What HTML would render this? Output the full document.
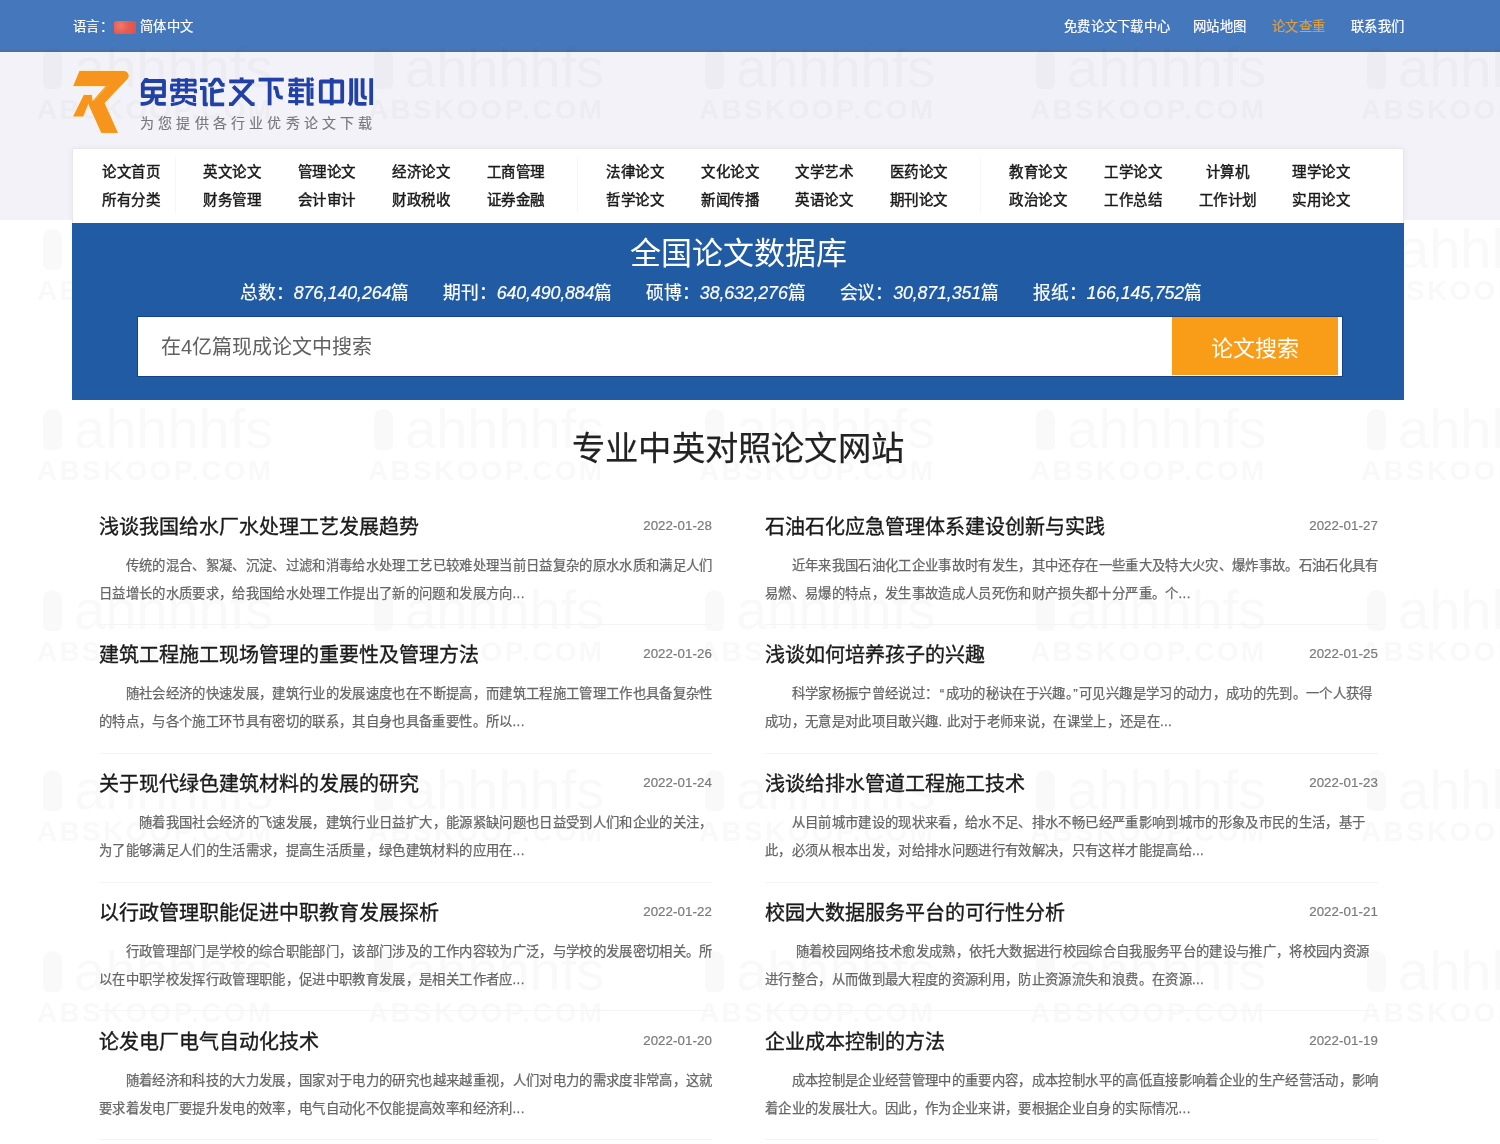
<!DOCTYPE html>
<html lang="zh-CN">
<head>
<meta charset="utf-8">
<title>免费论文下载中心</title>
<style>
*{box-sizing:border-box;margin:0;padding:0}
html,body{width:1500px;height:1144px;overflow:hidden}
body{font-family:"Liberation Sans",sans-serif;background:#fff;color:#222;position:relative}
a{color:inherit;text-decoration:none}
body>*{will-change:transform}
#list{position:absolute;left:0;top:0;width:1500px;height:1144px}
/* top bar */
#top{position:absolute;left:0;top:0;width:1500px;height:52px;background:#4577bd;color:#fff;font-size:13.3px;line-height:54px;letter-spacing:.28px;-webkit-text-stroke:.2px #fff}
#top:after{content:"";position:absolute;left:0;top:50px;width:1500px;height:2px;background:#4a70a4}
#top .l{position:absolute;left:73px;top:0;white-space:nowrap}
#top .flag{position:absolute;left:113.5px;top:20.5px;width:22.5px;height:13.5px;background:radial-gradient(circle at 30% 35%,#f07a6c 0,#e55d52 45%,#dc5249 100%);border-radius:2px}
#top .cn{position:absolute;left:140px;top:0;white-space:nowrap}
#top .r a{position:absolute;top:0;white-space:nowrap}
/* header */
#head{position:absolute;left:0;top:52px;width:1500px;height:168px;background:#f3f2f8}
#logoR{position:absolute;left:70px;top:66px}
#logoT{position:absolute;left:136px;top:74px}
#logoS{position:absolute;left:140px;top:113px;font-size:14px;line-height:20px;color:#77777c;white-space:nowrap;letter-spacing:4.2px;-webkit-text-stroke:.15px #77777c}
/* nav */
#nav{position:absolute;left:72px;top:148px;width:1332px;height:75px;background:#fff;border:1px solid #e7e7ed;border-bottom:0;border-radius:2px 2px 0 0;box-shadow:0 0 7px rgba(20,20,60,.05)}
#nav a{position:absolute;width:96px;margin-left:-48px;text-align:center;font-size:14.5px;line-height:20px;font-weight:400;color:#1a1a1a;white-space:nowrap;letter-spacing:.4px;padding-left:.4px;-webkit-text-stroke:.45px #1a1a1a}
#nav .r1{top:13px}
#nav .r2{top:40.5px}
#nav i{position:absolute;top:8px;width:1px;height:56px;background:#f7f7f9}
/* banner */
#ban{position:absolute;left:72px;top:223px;width:1332px;height:177px;background:#215ba4;color:#fff}
#ban h2{position:absolute;left:0;top:10px;width:1332px;text-align:center;font-size:31px;line-height:42px;font-weight:400}
#ban .st{position:absolute;left:0;top:57px;width:1332px;text-align:center;font-size:17.8px;line-height:26px;white-space:nowrap;letter-spacing:-.12px;-webkit-text-stroke:.2px #fff}
#ban .st span{display:inline-block;margin-right:34px}
#ban .st em{font-style:italic}
#sb{position:absolute;left:66px;top:94px;width:1204px;height:59px;background:#fff;box-shadow:0 0 0 1px rgba(16,60,125,.75)}
#sb .ph{position:absolute;left:23px;top:0;line-height:60px;font-size:20px;color:#606060}
#sb .btn{position:absolute;left:1034px;top:0;width:166px;height:58px;background:#f99c18;color:#fff;font-size:22px;line-height:64px;text-align:center}
/* headline */
#hl{position:absolute;left:0;top:424px;-webkit-text-stroke:.25px #222;width:1476px;text-align:center;font-size:33.3px;line-height:50px;font-weight:400;color:#222;letter-spacing:.2px;padding-left:.2px}
/* list */
.it{position:absolute;width:613px;height:129px}
.it:after{content:"";position:absolute;left:0;top:130px;width:613px;height:1px;background:#f4f4f4}
.it h3{position:absolute;left:0;top:18.5px;font-size:20px;line-height:28px;font-weight:400;color:#1a1a1a;white-space:nowrap;-webkit-text-stroke:.35px #1a1a1a}
.it time{position:absolute;right:0;top:21.5px;font-size:13.3px;line-height:20px;color:#7a7a7a;letter-spacing:.08px;-webkit-text-stroke:.2px #7a7a7a}
.it q{quotes:none;padding:0 1.2px}
.it p{position:absolute;left:0;top:57.5px;width:616px;font-size:13.33px;line-height:28px;color:#676767;text-indent:26.7px;letter-spacing:.34px;-webkit-text-stroke:.25px #676767}

#wm{position:absolute;left:0;top:0;width:1500px;height:1144px;overflow:hidden;pointer-events:none;color:rgba(30,30,60,.028)}
#wm .w{position:absolute;width:245px;height:80px}
#wm i{position:absolute;left:6px;top:1px;width:19px;height:41px;border-radius:10px 10px 6px 6px;background:rgba(30,30,60,.028)}
#wm b{position:absolute;left:37px;top:-7px;font-size:56px;line-height:56px;font-weight:400;font-style:normal;white-space:nowrap}
#wm u{position:absolute;left:0;top:49px;font-size:28px;line-height:28px;letter-spacing:2.3px;font-weight:700;text-decoration:none;white-space:nowrap}
</style>
</head>
<body>
<div id="top">
 <span class="l">语言：</span><span class="flag"></span><span class="cn">简体中文</span>
 <div class="r">
  <a style="left:1064px">免费论文下载中心</a>
  <a style="left:1193px">网站地图</a>
  <a style="left:1272px;color:#dda043;-webkit-text-stroke:.2px #dda043">论文查重</a>
  <a style="left:1351px">联系我们</a>
 </div>
</div>
<div id="head"></div>
<div id="wm">
<div class="w" style="left:37px;top:47.0px"><i></i><b>ahhhhfs</b><u>ABSKOOP.COM</u></div>
<div class="w" style="left:368px;top:47.0px"><i></i><b>ahhhhfs</b><u>ABSKOOP.COM</u></div>
<div class="w" style="left:699px;top:47.0px"><i></i><b>ahhhhfs</b><u>ABSKOOP.COM</u></div>
<div class="w" style="left:1030px;top:47.0px"><i></i><b>ahhhhfs</b><u>ABSKOOP.COM</u></div>
<div class="w" style="left:1361px;top:47.0px"><i></i><b>ahhhhfs</b><u>ABSKOOP.COM</u></div>
<div class="w" style="left:37px;top:227.5px"><i></i><b>ahhhhfs</b><u>ABSKOOP.COM</u></div>
<div class="w" style="left:368px;top:227.5px"><i></i><b>ahhhhfs</b><u>ABSKOOP.COM</u></div>
<div class="w" style="left:699px;top:227.5px"><i></i><b>ahhhhfs</b><u>ABSKOOP.COM</u></div>
<div class="w" style="left:1030px;top:227.5px"><i></i><b>ahhhhfs</b><u>ABSKOOP.COM</u></div>
<div class="w" style="left:1361px;top:227.5px"><i></i><b>ahhhhfs</b><u>ABSKOOP.COM</u></div>
<div class="w" style="left:37px;top:408.0px"><i></i><b>ahhhhfs</b><u>ABSKOOP.COM</u></div>
<div class="w" style="left:368px;top:408.0px"><i></i><b>ahhhhfs</b><u>ABSKOOP.COM</u></div>
<div class="w" style="left:699px;top:408.0px"><i></i><b>ahhhhfs</b><u>ABSKOOP.COM</u></div>
<div class="w" style="left:1030px;top:408.0px"><i></i><b>ahhhhfs</b><u>ABSKOOP.COM</u></div>
<div class="w" style="left:1361px;top:408.0px"><i></i><b>ahhhhfs</b><u>ABSKOOP.COM</u></div>
<div class="w" style="left:37px;top:588.5px"><i></i><b>ahhhhfs</b><u>ABSKOOP.COM</u></div>
<div class="w" style="left:368px;top:588.5px"><i></i><b>ahhhhfs</b><u>ABSKOOP.COM</u></div>
<div class="w" style="left:699px;top:588.5px"><i></i><b>ahhhhfs</b><u>ABSKOOP.COM</u></div>
<div class="w" style="left:1030px;top:588.5px"><i></i><b>ahhhhfs</b><u>ABSKOOP.COM</u></div>
<div class="w" style="left:1361px;top:588.5px"><i></i><b>ahhhhfs</b><u>ABSKOOP.COM</u></div>
<div class="w" style="left:37px;top:769.0px"><i></i><b>ahhhhfs</b><u>ABSKOOP.COM</u></div>
<div class="w" style="left:368px;top:769.0px"><i></i><b>ahhhhfs</b><u>ABSKOOP.COM</u></div>
<div class="w" style="left:699px;top:769.0px"><i></i><b>ahhhhfs</b><u>ABSKOOP.COM</u></div>
<div class="w" style="left:1030px;top:769.0px"><i></i><b>ahhhhfs</b><u>ABSKOOP.COM</u></div>
<div class="w" style="left:1361px;top:769.0px"><i></i><b>ahhhhfs</b><u>ABSKOOP.COM</u></div>
<div class="w" style="left:37px;top:949.5px"><i></i><b>ahhhhfs</b><u>ABSKOOP.COM</u></div>
<div class="w" style="left:368px;top:949.5px"><i></i><b>ahhhhfs</b><u>ABSKOOP.COM</u></div>
<div class="w" style="left:699px;top:949.5px"><i></i><b>ahhhhfs</b><u>ABSKOOP.COM</u></div>
<div class="w" style="left:1030px;top:949.5px"><i></i><b>ahhhhfs</b><u>ABSKOOP.COM</u></div>
<div class="w" style="left:1361px;top:949.5px"><i></i><b>ahhhhfs</b><u>ABSKOOP.COM</u></div>
</div>
<svg id="logoR" width="64" height="72" viewBox="70 66 64 72"><g fill="#f7941d" stroke="#fdeebd" stroke-width="1.4" paint-order="stroke" stroke-linejoin="round"><path d="M79.7 71 H123.2 Q126.6 71 127.9 73.6 Q129.3 76.6 127.2 79 L104.3 103.1 L117.7 132.7 H101.4 L88.3 103.6 L91.7 94.9 L92.4 101.6 L105.9 86 H73.4 Z"/><path d="M84 94.9 H91.7 L83.1 116.3 H73.4 Z"/></g><path d="M79.7 71 H123.2 Q126.6 71 127.9 73.6 Q129.3 76.6 127.2 79 L104.3 103.1 L117.7 132.7 H101.4 L88.3 103.6 L91.7 94.9 L92.4 101.6 L105.9 86 H73.4 Z M84 94.9 H91.7 L83.1 116.3 H73.4 Z" fill="#f7941d"/><path d="M94.2 100.6 L108.4 85.2" stroke="#fbb65a" stroke-width=".7" fill="none"/></svg>
<svg id="logoT" width="244" height="36" viewBox="136 74 244 36" role="img" aria-label="免费论文下载中心"><title>免费论文下载中心</title>
<g fill="none" stroke="#2241a6" stroke-width="3.8" stroke-linejoin="round">
<!-- 免 -->
<path d="M144.6 77.9 H148.6 L144.6 83.6 H140.9 Z" fill="#2241a6" stroke="none"/><path d="M144.8 81 H164 V96.2 H142.8 V83"/><path d="M142.8 88.5 H164"/><path d="M152.8 88.5 V96.2"/><path d="M152.6 96.2 C152.4 101.5 149 103.9 140.6 103.9"/><path d="M156.6 96.2 V101.4 Q156.6 103.8 159 103.8 H165.8"/>
<!-- 论 -->
<path d="M200 80.2 H207.6"/><path d="M200 88 H204.6 V104.4 H207.8"/><path d="M208.4 84.8 H211.8 L215.2 79.6 H218.6 L221.8 84.8 H224.6"/><path d="M212 87.4 V104.4 H224.2"/><path d="M212 92 L223.8 90.2"/>
<!-- 文 -->
<path d="M241.6 77.4 V81"/><path d="M229.2 81.4 H254.2"/><path d="M233.2 86.4 L251.8 104.2 H254.6"/><path d="M251.2 82.6 L232.2 104.2 H229"/>
<!-- 下 -->
<path d="M258.6 79.6 H283.8"/><path d="M269.6 79.6 V105.3"/><path d="M273.4 87.8 H276.2 L277.8 95.4 Q278.4 97.5 282.8 97.6"/>
<!-- 中 -->
<path d="M320.8 81.5 H342.2 V101.7 H320.8 Z"/><path d="M331.7 78 V105.3"/>
<!-- 心 -->
<path d="M351.2 78.2 V99 Q351.2 103 349 104.9"/><path d="M356.3 78.2 V101.4 Q356.3 103.9 358.8 103.9 H366.4"/><path d="M362.6 78.2 V95 Q362.6 97.8 366.8 97.8"/><path d="M371.2 78.2 V105"/>
</g>
<g fill="none" stroke="#2241a6" stroke-width="3.1" stroke-linejoin="round">
<!-- 费 -->
<path d="M171.2 80.2 H195 V85 H171.6 V90 H195.4 V93.2"/><path d="M178.6 78.2 V91 Q178.4 93.6 175.6 94"/><path d="M186.4 78.2 V93.6"/>
<path d="M172.8 102 V96.6 H194.4 V102"/><path d="M183.6 96.6 V99.6 Q183 103.4 170.8 104.6"/><path d="M185.4 100.4 Q188 103.4 196.2 104.6"/>
<!-- 载 -->
<path d="M296.2 77.4 V84.8"/><path d="M288.6 80.2 H304"/><path d="M288.2 84.8 H313.6"/>
<path d="M289 90 H303.8"/><path d="M291.6 87 L290 95.6 H303.8"/><path d="M288.2 101.6 H303.8"/><path d="M296.6 87 V105.3"/>
<path d="M308.2 77.4 V104.2 H313.6" stroke-width="3.3"/><path d="M311.9 87.6 V99"/><path d="M311 77.8 L312.9 80.8"/>
</g></svg>
<div id="logoS">为您提供各行业优秀论文下载</div>
<div id="nav">
 <a class="r1" style="left:58px">论文首页</a><a class="r2" style="left:58px">所有分类</a>
 <a class="r1" style="left:159px">英文论文</a><a class="r2" style="left:159px">财务管理</a>
 <a class="r1" style="left:253.5px">管理论文</a><a class="r2" style="left:253.5px">会计审计</a>
 <a class="r1" style="left:348px">经济论文</a><a class="r2" style="left:348px">财政税收</a>
 <a class="r1" style="left:442.5px">工商管理</a><a class="r2" style="left:442.5px">证券金融</a>
 <a class="r1" style="left:562px">法律论文</a><a class="r2" style="left:562px">哲学论文</a>
 <a class="r1" style="left:657px">文化论文</a><a class="r2" style="left:657px">新闻传播</a>
 <a class="r1" style="left:751px">文学艺术</a><a class="r2" style="left:751px">英语论文</a>
 <a class="r1" style="left:845.5px">医药论文</a><a class="r2" style="left:845.5px">期刊论文</a>
 <a class="r1" style="left:965px">教育论文</a><a class="r2" style="left:965px">政治论文</a>
 <a class="r1" style="left:1060px">工学论文</a><a class="r2" style="left:1060px">工作总结</a>
 <a class="r1" style="left:1154.5px">计算机</a><a class="r2" style="left:1154.5px">工作计划</a>
 <a class="r1" style="left:1248px">理学论文</a><a class="r2" style="left:1248px">实用论文</a>
 <i style="left:102px"></i>
 <i style="left:504px"></i>
 <i style="left:907px"></i>
</div>
<div id="ban">
 <h2>全国论文数据库</h2>
 <div class="st"><span>总数：<em>876,140,264</em>篇</span><span>期刊：<em>640,490,884</em>篇</span><span>硕博：<em>38,632,276</em>篇</span><span>会议：<em>30,871,351</em>篇</span><span>报纸：<em>166,145,752</em>篇</span></div>
 <div id="sb"><span class="ph">在4亿篇现成论文中搜索</span><span class="btn">论文搜索</span></div>
</div>
<div id="hl">专业中英对照论文网站</div>
<div id="list">
 <div class="it" style="left:99px;top:494.0px"><h3>浅谈我国给水厂水处理工艺发展趋势</h3><time>2022-01-28</time><p>传统的混合、絮凝、沉淀、过滤和消毒给水处理工艺已较难处理当前日益复杂的原水水质和满足人们日益增长的水质要求，给我国给水处理工作提出了新的问题和发展方向...</p></div>
 <div class="it" style="left:765px;top:494.0px"><h3>石油石化应急管理体系建设创新与实践</h3><time>2022-01-27</time><p>近年来我国石油化工企业事故时有发生，其中还存在一些重大及特大火灾、爆炸事故。石油石化具有易燃、易爆的特点，发生事故造成人员死伤和财产损失都十分严重。个...</p></div>
 <div class="it" style="left:99px;top:622.8px"><h3>建筑工程施工现场管理的重要性及管理方法</h3><time>2022-01-26</time><p>随社会经济的快速发展，建筑行业的发展速度也在不断提高，而建筑工程施工管理工作也具备复杂性的特点，与各个施工环节具有密切的联系，其自身也具备重要性。所以...</p></div>
 <div class="it" style="left:765px;top:622.8px"><h3>浅谈如何培养孩子的兴趣</h3><time>2022-01-25</time><p>科学家杨振宁曾经说过：<q>“</q>成功的秘诀在于兴趣。<q>”</q>可见兴趣是学习的动力，成功的先到。一个人获得成功，无意是对此项目敢兴趣. 此对于老师来说，在课堂上，还是在...</p></div>
 <div class="it" style="left:99px;top:751.6px"><h3>关于现代绿色建筑材料的发展的研究</h3><time>2022-01-24</time><p>　随着我国社会经济的飞速发展，建筑行业日益扩大，能源紧缺问题也日益受到人们和企业的关注，为了能够满足人们的生活需求，提高生活质量，绿色建筑材料的应用在...</p></div>
 <div class="it" style="left:765px;top:751.6px"><h3>浅谈给排水管道工程施工技术</h3><time>2022-01-23</time><p>从目前城市建设的现状来看，给水不足、排水不畅已经严重影响到城市的形象及市民的生活，基于此，必须从根本出发，对给排水问题进行有效解决，只有这样才能提高给...</p></div>
 <div class="it" style="left:99px;top:880.4px"><h3>以行政管理职能促进中职教育发展探析</h3><time>2022-01-22</time><p>行政管理部门是学校的综合职能部门，该部门涉及的工作内容较为广泛，与学校的发展密切相关。所以在中职学校发挥行政管理职能，促进中职教育发展，是相关工作者应...</p></div>
 <div class="it" style="left:765px;top:880.4px"><h3>校园大数据服务平台的可行性分析</h3><time>2022-01-21</time><p>&nbsp;随着校园网络技术愈发成熟，依托大数据进行校园综合自我服务平台的建设与推广，将校园内资源进行整合，从而做到最大程度的资源利用，防止资源流失和浪费。在资源...</p></div>
 <div class="it" style="left:99px;top:1009.2px"><h3>论发电厂电气自动化技术</h3><time>2022-01-20</time><p>随着经济和科技的大力发展，国家对于电力的研究也越来越重视，人们对电力的需求度非常高，这就要求着发电厂要提升发电的效率，电气自动化不仅能提高效率和经济利...</p></div>
 <div class="it" style="left:765px;top:1009.2px"><h3>企业成本控制的方法</h3><time>2022-01-19</time><p>成本控制是企业经营管理中的重要内容，成本控制水平的高低直接影响着企业的生产经营活动，影响着企业的发展壮大。因此，作为企业来讲，要根据企业自身的实际情况...</p></div>
</div>
</body>
</html>
